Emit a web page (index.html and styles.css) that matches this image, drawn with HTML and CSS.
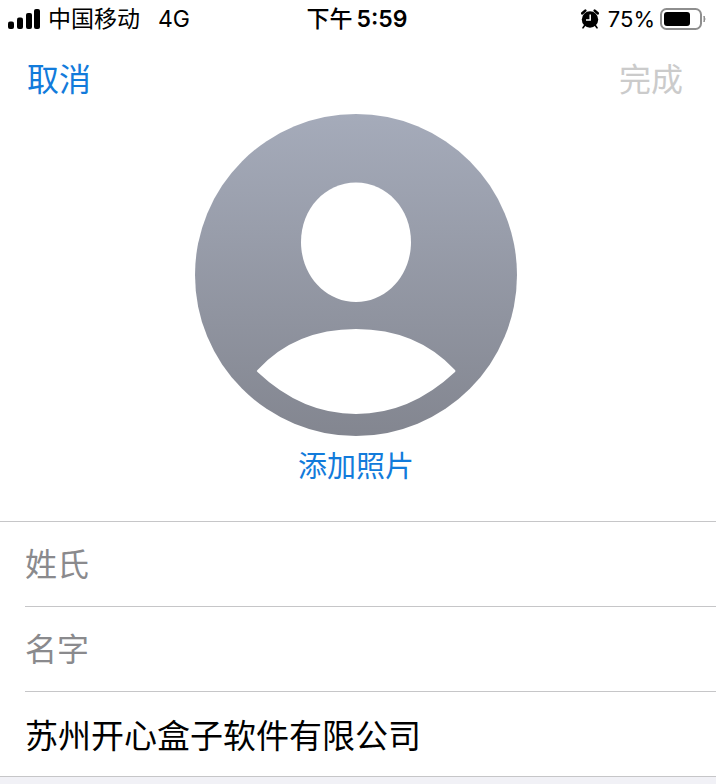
FILE: index.html
```
<!DOCTYPE html>
<html lang="zh-CN">
<head>
    <meta charset="UTF-8">
    <meta name="viewport" content="width=device-width, initial-scale=1">
    <title>新建联系人</title>
    <link rel="stylesheet" href="styles.css">
</head>
<body>

<div class="status">
    <div class="status-left">
        <svg class="signal" width="32" height="20" viewBox="0 0 32 20">
            <rect x="0" y="12.500" width="6" height="7.500" rx="2"/>
            <rect x="9" y="8.500" width="6" height="11.500" rx="2"/>
            <rect x="18" y="4" width="6" height="16" rx="2"/>
            <rect x="26" y="0" width="6" height="20" rx="2"/>
        </svg>
        <span>中国移动</span>
        <span class="network">4G</span>
    </div>
    <div class="status-time"><span class="period">下午</span><span>5:59</span></div>
    <div class="status-right">
        <svg class="alarm" width="18" height="20" viewBox="0 0 18 20">
            <circle cx="9" cy="10.500" r="8.200"/>
            <path d="M1.300 4.300 4.300 1.600M16.700 4.300 13.700 1.600" stroke="#000" stroke-width="2.600" stroke-linecap="round"/>
            <path d="M4 16 2 18.800M14 16 16 18.800" stroke="#000" stroke-width="1.600" stroke-linecap="round"/>
            <path d="M9.200 5.500V11H5" fill="none" stroke="#fff" stroke-width="1.500"/>
        </svg>
        <span class="percent">75%</span>
        <svg class="battery" width="46" height="22" viewBox="0 0 46 22">
            <rect x="1" y="1" width="40" height="20" rx="5.500" fill="#fff" stroke="#8e8e8e" stroke-width="2"/>
            <rect x="4" y="4" width="26" height="14" rx="3"/>
            <path d="M44 8q2 3 0 6z" fill="#8e8e8e" stroke="#8e8e8e"/>
        </svg>
    </div>
</div>

<div class="nav">
    <button type="button">取消</button>
    <button type="button" disabled>完成</button>
</div>

<div class="photo">
    <svg width="322" height="322" viewBox="0 0 322 322">
        <defs>
            <linearGradient id="avatar" x1="0" y1="0" x2="0" y2="1">
                <stop offset="0" stop-color="#a5abba"/>
                <stop offset="1" stop-color="#838690"/>
            </linearGradient>
        </defs>
        <circle cx="161" cy="161" r="161" fill="url(#avatar)"/>
        <path d="M161 68.500C192 68.500 216 95 216 128S192 188 161 188 106 161 106 128 130 68.500 161 68.500Z" fill="#fff"/>
        <path d="M62.500 256Q100 215 161 215T260 256Q261 257 260 258Q215 300 161 300T62.500 258Q61 257 62.500 256Z" fill="#fff"/>
    </svg>
    <button type="button">添加照片</button>
</div>

<form class="fields">
    <div class="row"><input type="text" aria-label="姓氏" placeholder="姓氏"></div>
    <div class="row"><input type="text" aria-label="名字" placeholder="名字"></div>
    <div class="row"><input type="text" aria-label="公司" value="苏州开心盒子软件有限公司"></div>
</form>

</body>
</html>
```
FILE: styles.css
```
*{
    box-sizing: border-box;
}
body{
    margin: 0;
    background: #f1f1f6;
    color: #000;
    font-family: Inter, "Noto Sans CJK SC", sans-serif;
}
button, input{
    border: 0;
    padding: 0;
    background: none;
    font-family: inherit;
}
button{
    color: #127bdb;
    cursor: pointer;
}
button:disabled{
    color: #cbcbcb;
    cursor: default;
}
svg{
    display: block;
}
.status{
    display: grid;
    grid-template-columns: 1fr auto 1fr;
    align-items: center;
    height: 38px;
    padding: 0 10px 0 8px;
    background: #fff;
    font-size: 23px;
    line-height: 36px;
}
.status-left, .status-right{
    display: flex;
    align-items: center;
}
.signal{
    margin-right: 8px;
}
.network{
    margin-left: 18px;
}
.status-time{
    display: flex;
    gap: 4px;
    font-weight: 600;
}
.period{
    font-weight: 500;
}
.status-right{
    justify-content: flex-end;
}
.alarm{
    margin-right: 9px;
}
.percent{
    font-size: 22px;
}
.battery{
    margin-left: 5px;
}
.nav{
    display: flex;
    justify-content: space-between;
    padding: 18px 33px 10px 27px;
    background: #fff;
}
.nav button{
    font-size: 32px;
    line-height: 48px;
}
.photo{
    display: flex;
    flex-direction: column;
    align-items: center;
    padding: 0 4px 32px 0;
    background: #fff;
}
.photo button{
    margin-top: 9px;
    font-size: 29px;
    line-height: 44px;
}
.fields{
    padding-left: 25px;
    background: #fff;
    border-top: 1px solid #c6c6c8;
    border-bottom: 1px solid #c6c6c8;
}
.row + .row{
    border-top: 1px solid #c6c6c8;
}
.row input{
    display: block;
    width: 100%;
    height: 84px;
    color: #000;
    font-size: 33px;
    outline: none;
}
.row input::placeholder{
    color: #8a8a8d;
    font-size: 32px;
    opacity: 1;
}
```
